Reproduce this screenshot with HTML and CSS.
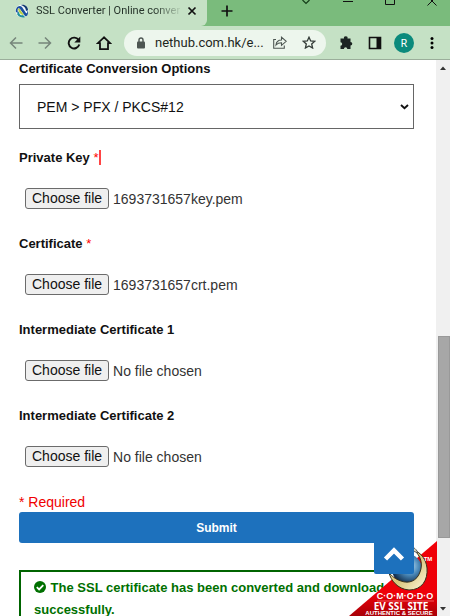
FILE: index.html
```html
<!DOCTYPE html>
<html lang="en">
<head>
<meta charset="utf-8">
<meta name="viewport" content="width=device-width, initial-scale=1">
<title>SSL Converter | Online converter</title>
<link rel="stylesheet" href="styles.css">
</head>
<body>
<div class="window">
  <header class="tabstrip">
    <div class="tab">
      <svg class="favicon" width="14" height="14" viewBox="0 0 14 14" aria-hidden="true">
        <circle cx="7" cy="7" r="6.5" fill="#f3f8fb"/>
        <path d="M1 8C0 4 4 0 7 3l4 6c1 1 2-1 1-4 2 3 1 8-2 7L5 5C3 3 2 5 3 9z" fill="#1b4fa0"/>
        <path d="M2 10c2 4 7 4 8 3L8 11c-2 1-4 0-4-4z" fill="#1f8f9c"/>
        <path d="M6 1c4-1 7 2 7 5l-2 1C11 4 9 2 6 1z" fill="#123a70"/>
        <path d="M3 5c1-1 2 0 3 2L9 11c-3 0-5-2-6-6z" fill="#b9cf3c"/>
      </svg>
      <span class="tab-title">SSL Converter | Online conver</span>
      <button class="icon-button" aria-label="Close tab">
        <svg width="10" height="10" viewBox="0 0 10 10"><path d="M1.5 1.5l7 7M8.5 1.5l-7 7" stroke="#111" stroke-width="1.7" fill="none"/></svg>
      </button>
    </div>
    <button class="icon-button new-tab" aria-label="New tab">
      <svg width="12" height="12" viewBox="0 0 12 12"><path d="M6 .5v11M.5 6h11" stroke="#111" stroke-width="1.7"/></svg>
    </button>
    <div class="window-controls">
      <button class="icon-button" aria-label="Search tabs"><svg width="12" height="6" viewBox="0 0 12 6"><path d="M2.5 0L6 3.500 9.500 0" stroke="#143c18" stroke-width="1.2" fill="none"/></svg></button>
      <button class="icon-button" aria-label="Minimise"><svg width="12" height="6" viewBox="0 0 12 6"><path d="M1 1.5h10" stroke="#111"/></svg></button>
      <button class="icon-button" aria-label="Maximise"><svg width="12" height="6" viewBox="0 0 12 6"><path d="M1.5 0v4.500h9V0" stroke="#111" fill="none"/></svg></button>
      <button class="icon-button" aria-label="Close"><svg width="12" height="6" viewBox="0 0 12 6"><path d="M1.5 5.500L6 1l4.500 4.500M5 0l1 1 1-1" stroke="#111" fill="none"/></svg></button>
    </div>
  </header>

  <nav class="toolbar" aria-label="Browser">
    <div class="nav-buttons">
      <button class="icon-button" aria-label="Back"><svg width="14" height="14" viewBox="0 0 14 14"><path d="M13.5 7h-12M7 1.500L1.500 7 7 12.500" stroke="#76857a" stroke-width="1.5" fill="none"/></svg></button>
      <button class="icon-button" aria-label="Forward"><svg width="14" height="14" viewBox="0 0 14 14"><path d="M.5 7h12M7 1.500L12.500 7 7 12.500" stroke="#76857a" stroke-width="1.5" fill="none"/></svg></button>
      <button class="icon-button" aria-label="Reload"><svg width="14" height="14" viewBox="0 0 14 14"><path d="M11.600 4A5.400 5.400 0 1 0 12.300 8.500" stroke="#111" stroke-width="1.9" fill="none"/><path d="M13.300.5v6h-6z" fill="#111"/></svg></button>
      <button class="icon-button" aria-label="Home"><svg width="16" height="14" viewBox="0 0 16 14"><path d="M8 1.300L1.800 7.200H4v5.900h8V7.200h2.200z" stroke="#111" stroke-width="1.8" fill="none"/></svg></button>
    </div>
    <div class="address">
      <svg width="8" height="12" viewBox="0 0 8 12" aria-hidden="true"><path d="M2 5V3a2 2 0 0 1 4 0v2" stroke="#4d5652" stroke-width="1.4" fill="none"/><rect y="4.5" width="8" height="7" rx="1" fill="#4d5652"/></svg>
      <input class="url" type="text" aria-label="Address" value="nethub.com.hk/e...">
      <button class="icon-button" aria-label="Share"><svg width="14" height="13" viewBox="0 0 14 13"><path d="M3 3.500H.7v8.800h10.600V9.500M3 9c.3-3.500 2.500-5 5.500-5V1.200l4.700 4.100-4.700 4.100V6.800C6 6.800 4.300 7.500 3 9z" stroke="#4d5652" stroke-width="1.1" fill="none"/></svg></button>
      <button class="icon-button" aria-label="Bookmark"><svg width="14" height="13" viewBox="0 0 14 13"><path d="M7 1.200l1.700 3.700 4.100.4-3.100 2.700.9 4L7 9.900 3.400 12l.9-4L1.200 5.300l4.100-.4z" stroke="#333b37" stroke-width="1.3" fill="none"/></svg></button>
    </div>
    <div class="tools">
      <button class="icon-button" aria-label="Extensions"><svg width="14" height="14" viewBox="0 0 14 14"><path d="M1.500 2.500H5a1.800 1.800 0 1 1 3.500 0h3V6a1.800 1.800 0 1 1 0 3.600V13H8.300a1.700 1.700 0 0 0-3.400 0H1.500V9.700a1.700 1.700 0 0 0 0-3.400z" fill="#1b2422"/></svg></button>
      <button class="icon-button" aria-label="Side panel"><svg width="14" height="14" viewBox="0 0 14 14"><path d="M1.500 1.500h11v11h-11z" stroke="#111" stroke-width="1.6" fill="none"/><path d="M8.500 1H13v12H8.500z" fill="#111"/></svg></button>
      <button class="avatar" aria-label="Profile">R</button>
      <button class="icon-button" aria-label="Menu"><svg width="4" height="14" viewBox="0 0 4 14"><circle cx="2" cy="2.5" r="1.5"/><circle cx="2" cy="7" r="1.5"/><circle cx="2" cy="11.5" r="1.5"/></svg></button>
    </div>
  </nav>

  <div class="viewport">
    <main class="page">
      <form class="converter" onsubmit="return false">
        <label class="field-label first" for="conversion">Certificate Conversion Options</label>
        <div class="select-wrap">
          <select class="conversion" id="conversion"><option>PEM &gt; PFX / PKCS#12</option></select>
          <svg class="chevron" width="9" height="6" viewBox="0 0 9 6" aria-hidden="true"><path d="M1 1l3.500 3.300L8 1" stroke="#111" stroke-width="1.9" fill="none"/></svg>
        </div>

        <div class="field">
          <label class="field-label" for="key">Private Key <span class="required caret">*</span></label>
          <div class="picker"><input type="file" id="key"><span class="choose">Choose file</span><span>1693731657key.pem</span></div>
        </div>
        <div class="field">
          <label class="field-label" for="crt">Certificate <span class="required">*</span></label>
          <div class="picker"><input type="file" id="crt"><span class="choose">Choose file</span><span>1693731657crt.pem</span></div>
        </div>
        <div class="field">
          <label class="field-label" for="int1">Intermediate Certificate 1</label>
          <div class="picker"><input type="file" id="int1"><span class="choose">Choose file</span><span>No file chosen</span></div>
        </div>
        <div class="field">
          <label class="field-label" for="int2">Intermediate Certificate 2</label>
          <div class="picker"><input type="file" id="int2"><span class="choose">Choose file</span><span>No file chosen</span></div>
        </div>

        <p class="required-note">* Required</p>
        <button class="submit" type="submit">Submit</button>
      </form>
      <div class="notice" role="status">
        <svg class="check" width="12" height="12" viewBox="0 0 12 12" aria-hidden="true"><circle cx="6" cy="6" r="6" fill="#007000"/><path d="M2.800 6.200l2.300 2.200 4.200-4.300" stroke="#fff" stroke-width="1.8" fill="none"/></svg>
        The SSL certificate has been converted and downloaded successfully.
      </div>
    </main>

    <svg class="seal" width="88" height="76" viewBox="0 0 88 76" role="img" aria-label="Comodo EV SSL Site">
      <defs>
        <linearGradient id="red" x1="0" y1="0" x2="0" y2="1"><stop offset="0" stop-color="#f00008"/><stop offset=".7" stop-color="#ee0008"/><stop offset="1" stop-color="#a80008"/></linearGradient>
        <linearGradient id="gold" x1="0" y1="0" x2="1" y2="1"><stop offset="0" stop-color="#fff8c8"/><stop offset=".5" stop-color="#d8c478"/><stop offset="1" stop-color="#fffbe0"/></linearGradient>
        <radialGradient id="globe" cx=".6" cy=".4" r=".6"><stop offset="0" stop-color="#b8dcf4"/><stop offset=".5" stop-color="#4a88b8"/><stop offset="1" stop-color="#133050"/></radialGradient>
      </defs>
      <path d="M88 1v75H0z" fill="url(#red)"/>
      <circle cx="58" cy="29" r="15" fill="url(#globe)"/>
      <path d="M40 33c2 7 8 16 20 17 13 0 19-10 18-22-1-9-6-15-13-18 7 6 9 14 6 22-3 9-11 12-19 9-6-2-9-5-12-8z" fill="url(#gold)" stroke="#39311a" stroke-width="1"/>
      <path d="M58 6c5 0 9 2 11 7l-5-2" fill="#d8d2b8" stroke="#444" stroke-width=".8"/>
      <text class="seal-tm" x="79" y="21">TM</text>
      <text class="seal-brand" x="56" y="59">C·O·M·O·D·O</text>
      <path d="M28 61h57" stroke="#ff8080" stroke-width=".7"/>
      <text class="seal-title" x="52" y="70">EV SSL SITE</text>
      <text class="seal-sub" x="50" y="75">AUTHENTIC &amp; SECURE</text>
    </svg>
    <button class="to-top" aria-label="Back to top"><svg width="22" height="16" viewBox="0 0 22 16"><path d="M2.500 13L11 4.500l8.500 8.500" stroke="#fff" stroke-width="4.5" fill="none"/></svg></button>

    <div class="scrollbar" aria-hidden="true">
      <svg width="8" height="8" viewBox="0 0 8 8"><path d="M1 6l3-3.500L7 6z" fill="#333"/></svg>
      <div class="track"><div class="thumb"></div></div>
      <svg width="8" height="8" viewBox="0 0 8 8"><path d="M1 2l3 3.500L7 2z" fill="#333"/></svg>
    </div>
  </div>
</div>
</body>
</html>
```

FILE: styles.css
```css
* { box-sizing: border-box; }
body { margin: 0; background: #fff; color: #111; font: 14px/20px "Liberation Sans", Arial, sans-serif; }
button { padding: 0; border: 0; font: inherit; }
svg { display: block; flex: none; }

.window { display: flex; flex-direction: column; height: 100vh; overflow: hidden; }
.icon-button { display: flex; align-items: center; justify-content: center; background: none; }

/* Tabs */
.tabstrip { display: flex; flex: none; height: 26px; background: #7abb7c; }
.tab { display: flex; align-items: center; width: 207px; padding: 0 10px 4px 15px; background: #c5e1c5; border-radius: 0 0 6px 0; }
.tab-title { flex: 1; min-width: 0; margin: 0 4px 0 7px; overflow: hidden; white-space: nowrap; font: 11px/16px Roboto, "Open Sans", sans-serif; color: #26332a; -webkit-mask-image: linear-gradient(to right, #000 80%, transparent); mask-image: linear-gradient(to right, #000 80%, transparent); }
.new-tab { margin-left: 14px; padding-bottom: 4px; }
.window-controls { display: flex; align-items: flex-start; gap: 30px; margin-left: auto; padding-right: 12px; }

/* Toolbar */
.toolbar { display: flex; align-items: center; flex: none; height: 34px; padding: 0 16px 0 9px; background: #c5e1c5; border-bottom: 1px solid #9bae9b; }
.nav-buttons { display: flex; gap: 15px; }
.address { display: flex; align-items: center; flex: 1; min-width: 0; height: 26px; margin: 0 13px 0 12px; padding: 0 10px 0 13px; background: #edf6ed; border-radius: 13px; }
.url { flex: 1; min-width: 0; margin: 0 8px 0 10px; padding: 0; border: 0; background: none; color: #1d2721; font: 13px/18px Roboto, "Open Sans", sans-serif; }
.address .icon-button + .icon-button { margin-left: 15px; }
.tools { display: flex; align-items: center; gap: 15px; }
.tools .avatar { width: 20px; height: 20px; margin: 0 1px 0 -3px; border-radius: 50%; background: #0b8a7c; color: #fff; font: 11px/20px "Noto Sans", sans-serif; text-align: center; }

/* Page */
.viewport { position: relative; display: flex; flex: 1; min-height: 0; }
.page { flex: 1; min-width: 0; height: 100%; padding: 0 22px 0 19px; overflow: hidden; }
.converter { display: flex; flex-direction: column; }
.field-label { display: block; font-size: 13px; font-weight: bold; line-height: 20px; color: #111; }
.first { padding-bottom: 6px; line-height: 18px; }
.select-wrap { position: relative; margin-bottom: 19px; }
.conversion { display: block; width: 100%; height: 45px; padding: 0 17px; appearance: none; border: 1px solid #666; border-radius: 0; background: #fff; color: #111; font: inherit; }
.chevron { position: absolute; top: 20px; right: 5px; pointer-events: none; }
.field { height: 86px; }
.picker { position: relative; display: flex; align-items: center; gap: 4px; margin: 20px 0 0 6px; color: #333; }
.picker input { position: absolute; inset: 0; width: 100%; opacity: 0; }
.choose { padding: 0 6px; border: 1px solid #6b6b6b; border-radius: 3px; background: #efefef; color: #111; line-height: 19px; }
.required { color: #f00; font-weight: normal; }
.caret { border-right: 2px solid #f44; }
.required-note { margin: 0; color: #f00000; }
.submit { height: 31px; border-radius: 3px; background: #1d71bd; color: #fff; font-size: 12px; font-weight: bold; }
.notice { margin-top: 27px; padding: 5px 4px 16px 13px; border: 2px solid #006400; color: #007000; font-size: 13px; font-weight: bold; line-height: 22px; }
.check { display: inline-block; margin-right: 1px; vertical-align: -1px; }

/* Overlays */
.seal { position: absolute; right: 13px; bottom: 0; overflow: hidden; }
.seal text { fill: #fff; text-anchor: middle; font-family: "Liberation Sans", Arial, sans-serif; font-weight: bold; }
.seal .seal-tm { font-size: 6px; }
.seal .seal-brand { font-size: 9px; }
.seal .seal-title { font: bold 10px "Noto Sans", sans-serif; }
.seal .seal-sub { font-size: 6px; }
.to-top { position: absolute; right: 36px; bottom: 42px; display: flex; align-items: center; justify-content: center; width: 40px; height: 41px; padding-top: 1px; background: #1d71bd; border-radius: 0 0 2px 2px; }

/* Scrollbar */
.scrollbar { display: flex; flex-direction: column; align-items: center; flex: none; width: 14px; padding: 4px 0 3px; background: #f0f0f0; }
.track { display: grid; grid-template-rows: 266fr 204fr 67fr; flex: 1; width: 12px; margin-left: 2px; }
.thumb { grid-row: 2; background: #a7a7a7; border: 1px solid #999; }
```
